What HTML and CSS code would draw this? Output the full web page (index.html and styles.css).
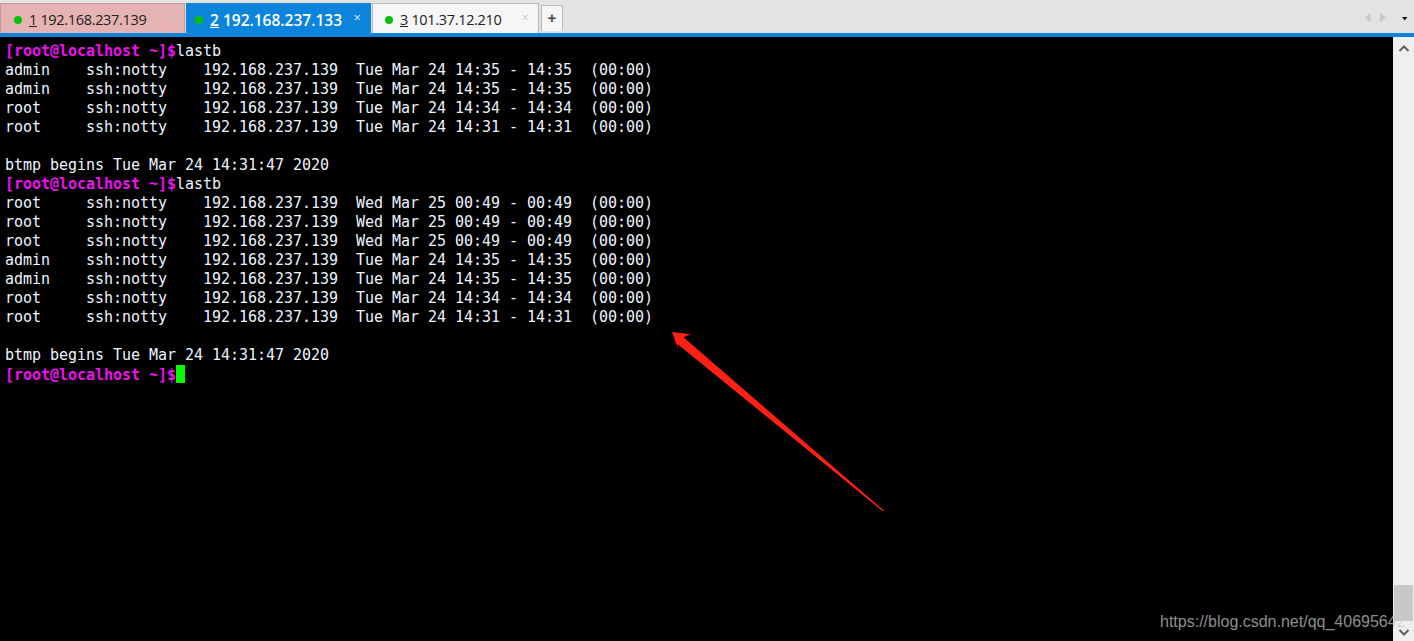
FILE: index.html
```html
<!DOCTYPE html>
<html lang="en">
<head>
<meta charset="utf-8">
<title>Xshell</title>
<link rel="stylesheet" href="styles.css">
</head>
<body>
<div class="app">
  <header class="tabbar">
    <div class="tab tab-red"><span class="dot"></span><span class="label"><u>1</u> 192.168.237.139</span><span class="close">×</span></div>
    <div class="tab tab-active"><span class="dot"></span><span class="label"><u>2</u> 192.168.237.133</span><span class="close">×</span></div>
    <div class="tab tab-plain"><span class="dot"></span><span class="label"><u>3</u> 101.37.12.210</span><span class="close">×</span></div>
    <div class="add">+</div>
    <div class="nav">
      <svg class="nav-icon" width="43" height="10" viewBox="0 0 43 10">
        <path d="M0 4.500L5.500 0V9.500Z" fill="#c8c8c8"/>
        <path d="M15 0L20.500 4.500L15 9.500Z" fill="#c8c8c8"/>
        <path d="M37 4H42.500L39.750 7.500Z" fill="#111"/>
      </svg>
    </div>
  </header>
  <div class="strip"></div>
  <main class="main">
<pre class="term"><span class="p">[root@localhost ~]$</span>lastb
admin    ssh:notty    192.168.237.139  Tue Mar 24 14:35 - 14:35  (00:00)
admin    ssh:notty    192.168.237.139  Tue Mar 24 14:35 - 14:35  (00:00)
root     ssh:notty    192.168.237.139  Tue Mar 24 14:34 - 14:34  (00:00)
root     ssh:notty    192.168.237.139  Tue Mar 24 14:31 - 14:31  (00:00)

btmp begins Tue Mar 24 14:31:47 2020
<span class="p">[root@localhost ~]$</span>lastb
root     ssh:notty    192.168.237.139  Wed Mar 25 00:49 - 00:49  (00:00)
root     ssh:notty    192.168.237.139  Wed Mar 25 00:49 - 00:49  (00:00)
root     ssh:notty    192.168.237.139  Wed Mar 25 00:49 - 00:49  (00:00)
admin    ssh:notty    192.168.237.139  Tue Mar 24 14:35 - 14:35  (00:00)
admin    ssh:notty    192.168.237.139  Tue Mar 24 14:35 - 14:35  (00:00)
root     ssh:notty    192.168.237.139  Tue Mar 24 14:34 - 14:34  (00:00)
root     ssh:notty    192.168.237.139  Tue Mar 24 14:31 - 14:31  (00:00)

btmp begins Tue Mar 24 14:31:47 2020
<span class="p">[root@localhost ~]$</span><span class="cursor"></span></pre>
    <aside class="scrollbar">
      <svg class="arrow" width="12" height="8" viewBox="0 0 12 8"><path d="M1.500 7L6 2.500L10.500 7" fill="none" stroke="#606060" stroke-width="2"/></svg>
      <div class="track"></div>
      <div class="thumb"></div>
      <svg class="arrow" width="12" height="8" viewBox="0 0 12 8"><path d="M1.500 1L6 5.500L10.500 1" fill="none" stroke="#606060" stroke-width="2"/></svg>
    </aside>
    <svg class="annot" width="240" height="200" viewBox="0 0 240 200">
      <path d="M12 12L30.500 14.300L23.500 17.300L223.800 190.500L223 191.500L17.500 24L18 29Z" fill="#ff2014"/>
    </svg>
    <div class="watermark">https://blog.csdn.net/qq_40695642</div>
  </main>
</div>
</body>
</html>
```
FILE: styles.css
```css
html, body { margin: 0; height: 100%; background: #000; overflow: hidden; }
.app { width: 1414px; height: 641px; display: flex; flex-direction: column; }
.tabbar { height: 33px; box-sizing: border-box; padding-top: 3px; background: #e3e3e3; display: flex; align-items: stretch; font-family: "Open Sans", "Noto Sans", sans-serif; font-size: 14.500px; }
.tab { box-sizing: border-box; height: 30px; display: flex; align-items: center; padding: 2px 0 0 13px; border: 1px solid #b4b4b4; border-bottom: 0; margin-right: 1px; position: relative; color: #222; }
.tab-red { width: 185px; background: #e6b3b3; border-color: #c49a9a; }
.tab-active { width: 185px; background: #0c84dc; border-color: #0c84dc; color: #fff; font-weight: 600; padding-left: 8px; font-size: 15.500px; }
.tab-plain { width: 167px; background: #f6f6f6; border-color: #b9b9b9; padding-left: 12px; }
.dot { width: 8px; height: 8px; border-radius: 50%; background: #0dbf0d; margin-right: 7px; flex: none; }
.label { white-space: nowrap; letter-spacing: -0.33px; }
.tab-active .label { letter-spacing: 0; }
.close { position: absolute; right: 9px; top: 5px; font-size: 13px; line-height: 16px; color: #c9c9c9; font-weight: 400; }
.tab-active .close { color: #d8ecfa; }
.add { box-sizing: border-box; width: 22px; height: 26px; margin: 2px 0 0 1px; background: #f6f6f6; border: 1px solid #b9b9b9; border-bottom: 0; color: #444; font: 700 15px/24px "Liberation Sans", sans-serif; text-align: center; }
.nav { margin-left: auto; padding: 10px 6px 0 0; }
.nav-icon { display: block; }
.strip { height: 4px; background: #0c84dc; }
.main { flex: 1; position: relative; display: flex; background: #000; min-height: 0; }
.term { flex: 1; margin: 0; padding: 5px 0 0 5px; font-family: "DejaVu Sans Mono", monospace; font-size: 15px; line-height: 19px; letter-spacing: -0.03px; color: #eef4ff; overflow: hidden; }
.p { color: #f010f0; font-weight: 700; }
.cursor { display: inline-block; width: 9px; height: 18px; background: #00ff00; vertical-align: -3px; }
.scrollbar { width: 21px; flex: none; background: #efefef; display: flex; flex-direction: column; align-items: center; padding: 7px 0 4px; box-sizing: border-box; }
.arrow { flex: none; display: block; }
.track { flex: 1; }
.thumb { width: 19px; height: 36px; background: #c8c8c8; margin-bottom: 8px; }
.annot { position: absolute; left: 660px; top: 283px; }
.watermark { position: absolute; left: 1160px; top: 574px; font: 16px/22px "Liberation Sans", sans-serif; color: rgba(200,200,200,.72); white-space: nowrap; }
```
